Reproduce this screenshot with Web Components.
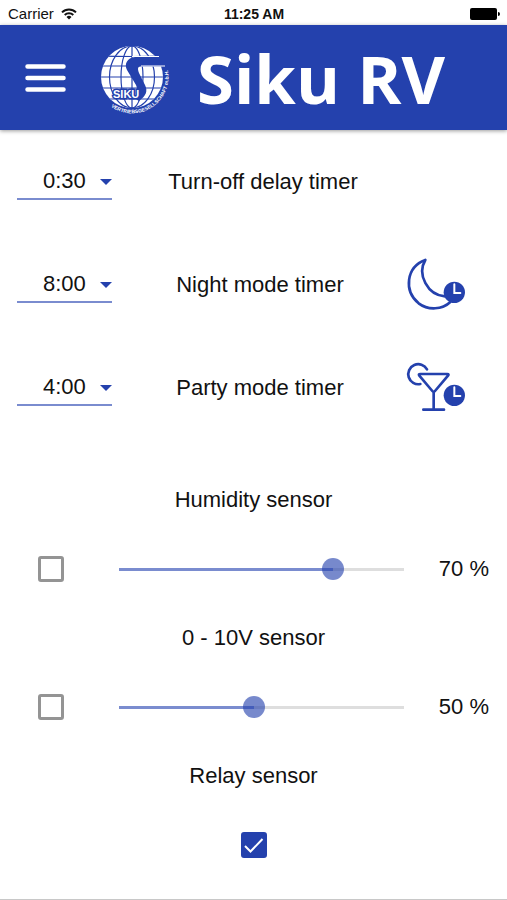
<!DOCTYPE html>
<html lang="en">
<head>
<meta charset="utf-8">
<meta name="viewport" content="width=device-width, initial-scale=1">
<title>Siku RV</title>
<style>
    :root {
        --primary: #2441ad;
        --primary-soft: #7a8ccf;
    }
    body {
        margin: 0;
        background: #fff;
        color: #111;
        font: 22px/28px "Liberation Sans", Arial, sans-serif;
    }
</style>
</head>
<body>
<siku-app>
    <status-bar slot="status" carrier="Carrier" time="11:25 AM"></status-bar>
    <app-header slot="header">Siku RV</app-header>
    <timer-row slot="timers" value="0:30">Turn-off delay timer</timer-row>
    <timer-row slot="timers" value="8:00" icon="moon">Night mode timer</timer-row>
    <timer-row slot="timers" value="4:00" icon="party">Party mode timer</timer-row>
    <sensor-section slot="sensors" min="40" max="80" value="70">Humidity sensor</sensor-section>
    <sensor-section slot="sensors" min="5" max="100" value="50">0 - 10V sensor</sensor-section>
    <sensor-section slot="sensors" checked>Relay sensor</sensor-section>
</siku-app>

<script>
class SikuApp extends HTMLElement {
    constructor() {
        super();
        this.attachShadow({ mode: 'open' });
        this.shadowRoot.innerHTML = `
        <style>
            :host {
                display: flex;
                flex-direction: column;
                box-sizing: border-box;
                min-height: 100vh;
                border-bottom: 1px solid #c8c8c8;
            }
            .sensors {
                padding-top: 27px;
            }
        </style>
        <slot name="status"></slot>
        <slot name="header"></slot>
        <main>
            <div class="timers"><slot name="timers"></slot></div>
            <div class="sensors"><slot name="sensors"></slot></div>
        </main>
        `;
    }
}

class StatusBar extends HTMLElement {
    constructor() {
        super();
        this.attachShadow({ mode: 'open' });
        this.shadowRoot.innerHTML = `
        <style>
            :host {
                display: grid;
                grid-template-columns: 1fr auto 1fr;
                align-items: center;
                height: 25px;
                padding: 2px 7px 0 8px;
                box-sizing: border-box;
                font-size: 14px;
                line-height: 20px;
            }
            .network {
                display: flex;
                align-items: center;
                gap: 7px;
                font-size: 15px;
            }
            .time {
                font-weight: bold;
            }
            .battery {
                justify-self: end;
            }
            svg {
                display: block;
            }
        </style>
        <div class="network">
            <span class="carrier"></span>
            <svg width="16" height="12" viewBox="0 0 16 12" fill="none" stroke="#111" stroke-width="2" aria-hidden="true">
                <path d="M1 4.4a10 10 0 0 1 14 0M3.7 7a6.2 6.2 0 0 1 8.6 0"/>
                <path d="M8 11.5L5.5 9a3.6 3.6 0 0 1 5 0z" fill="#111" stroke="none"/>
            </svg>
        </div>
        <span class="time"></span>
        <svg class="battery" width="30" height="12" viewBox="0 0 30 12" aria-hidden="true">
            <rect width="27" height="12" rx="2"/>
            <path d="M28 4q2 0 2 2t-2 2z"/>
        </svg>
        `;
    }

    connectedCallback() {
        this.shadowRoot.querySelector('.carrier').textContent = this.getAttribute('carrier');
        this.shadowRoot.querySelector('.time').textContent = this.getAttribute('time');
    }
}

class SikuLogo extends HTMLElement {
    constructor() {
        super();
        this.attachShadow({ mode: 'open' });
        this.shadowRoot.innerHTML = `
        <style>
            :host {
                display: block;
            }
            svg {
                display: block;
                overflow: visible;
            }
            text {
                fill: #fff;
                font-family: "Liberation Sans", Arial, sans-serif;
                font-size: 5px;
                font-weight: bold;
            }
            .name {
                font-size: 11px;
                stroke: var(--primary);
                stroke-width: 3px;
                paint-order: stroke;
            }
        </style>
        <svg width="68" height="70" viewBox="0 -3 68 70" role="img" aria-label="Siku">
            <defs>
                <clipPath id="globe"><circle cx="32" cy="31" r="31"/></clipPath>
                <path id="rim" d="M11 60.7A36.5 36.5 0 0 0 66.500 19"/>
            </defs>
            <circle cx="32" cy="31" r="31" fill="#fff"/>
            <g clip-path="url(#globe)" fill="none" stroke="var(--primary)" stroke-width="1.2">
                <path d="M0 20H64M0 31H64M0 42H64M0 53H64M0 10Q32 11 64 10M32 0V62"/>
                <ellipse cx="32" cy="31" rx="11" ry="31"/>
                <ellipse cx="32" cy="31" rx="22.5" ry="31"/>
            </g>
            <path d="M66 11H35C27 12 24 18 27 24L36 39C38 44 37 48 34 52L39 55C46 50 48 45 45 39L39 27C37 22 38 20 42 20H66z" fill="var(--primary)"/>
            <path d="M32 10.5H59M41 20H65" stroke="#fff" stroke-width="1"/>
            <text class="name" x="13" y="52">SIKU</text>
            <text><textPath href="#rim">VERTRIEBSGESELL</textPath></text>
            <text><textPath href="#rim" startOffset="49">SCHAFT m.b.H.</textPath></text>
        </svg>
        `;
    }
}

class AppHeader extends HTMLElement {
    constructor() {
        super();
        this.attachShadow({ mode: 'open' });
        this.shadowRoot.innerHTML = `
        <style>
            :host {
                display: block;
            }
            header {
                display: flex;
                align-items: center;
                height: 105px;
                padding: 0 25px;
                background: var(--primary);
                color: #fff;
                box-shadow: 0 1px 4px rgba(0, 0, 0, .4);
            }
            button {
                flex: none;
                padding: 0;
                border: 0;
                background: none;
                color: inherit;
                cursor: pointer;
            }
            svg {
                display: block;
            }
            siku-logo {
                flex: none;
                margin: 0 29px 0 34px;
            }
            h1 {
                margin: 0;
                font: bold 67px/96px "Open Sans", "Noto Sans", sans-serif;
                white-space: nowrap;
            }
        </style>
        <header>
            <button type="button" aria-label="Menu">
                <svg width="41" height="28" viewBox="0 0 41 28" stroke="currentColor" stroke-width="4.5" stroke-linecap="round" aria-hidden="true">
                    <path d="M2.5 2.5H38.5M2.5 14H38.5M2.5 25.5H38.5"/>
                </svg>
            </button>
            <siku-logo></siku-logo>
            <h1><slot></slot></h1>
        </header>
        `;
    }
}

const CLOCK = '<circle cx="178" cy="128" r="32" fill="currentColor" stroke="none"/><path d="M178 104V130H196" stroke="#fff" stroke-width="6"/>';

const MODE_ICONS = {
    moon: `<path d="M91 31C33 52 26 124 71 161C100 183 142 180 166 157M91 31C65 74 98 137 150 140"/>${CLOCK}`,
    party: `<path d="M76 64H157Q163 64 159 69L120 115Q116 120 112 115L73 69Q69 64 76 64zM116 118V170M85 171H147M96 50A30 30 0 1 0 76 94"/>${CLOCK}`,
};

class TimerRow extends HTMLElement {
    constructor() {
        super();
        this.attachShadow({ mode: 'open' });
        this.shadowRoot.innerHTML = `
        <style>
            :host {
                display: flex;
                align-items: center;
                height: 103px;
                padding: 0 42px 0 17px;
            }
            .field {
                display: grid;
                flex: none;
                width: 95px;
                align-items: center;
            }
            .field > * {
                grid-area: 1 / 1;
            }
            select {
                appearance: none;
                height: 36px;
                padding: 0 0 0 26px;
                border: 0;
                border-bottom: 2px solid var(--primary-soft);
                border-radius: 0;
                background: none;
                color: inherit;
                font: inherit;
                outline: none;
            }
            .arrow {
                justify-self: end;
                pointer-events: none;
                color: var(--primary);
            }
            label {
                flex: 1;
                text-align: center;
            }
            .icon {
                flex: none;
                min-width: 51px;
                color: var(--primary);
            }
            svg {
                display: block;
                overflow: visible;
            }
        </style>
        <div class="field">
            <select id="time"></select>
            <svg class="arrow" width="12" height="6" viewBox="0 0 12 6" fill="currentColor" aria-hidden="true"><path d="M0 0H12L6 6z"/></svg>
        </div>
        <label for="time"><slot></slot></label>
        <div class="icon"></div>
        `;
    }

    connectedCallback() {
        this.shadowRoot.querySelector('select').add(new Option(this.getAttribute('value')));

        const icon = MODE_ICONS[this.getAttribute('icon')];
        if (icon) {
            this.shadowRoot.querySelector('.icon').innerHTML = `
            <svg width="57" height="54" viewBox="39 25 171 162" fill="none" stroke="currentColor" stroke-width="8" stroke-linecap="round" aria-hidden="true">${icon}</svg>`;
        }
    }
}

class TickBox extends HTMLElement {
    constructor() {
        super();
        this.attachShadow({ mode: 'open', delegatesFocus: true });
        this.shadowRoot.innerHTML = `
        <style>
            :host {
                display: inline-grid;
            }
            input, svg {
                grid-area: 1 / 1;
            }
            input {
                appearance: none;
                box-sizing: border-box;
                width: 26px;
                height: 26px;
                margin: 0;
                border: 3px solid #949494;
                border-radius: 3px;
                cursor: pointer;
            }
            input:checked {
                border-color: var(--primary);
                background: var(--primary);
            }
            svg {
                visibility: hidden;
                pointer-events: none;
            }
            input:checked + svg {
                visibility: visible;
            }
        </style>
        <input type="checkbox">
        <svg width="26" height="26" viewBox="0 0 26 26" fill="none" stroke="#fff" stroke-width="2" aria-hidden="true"><path d="M4 14L9.5 19.5L21.5 7"/></svg>
        `;
    }

    connectedCallback() {
        const input = this.shadowRoot.querySelector('input');
        input.checked = this.hasAttribute('checked');
        input.setAttribute('aria-label', this.getAttribute('label'));
    }
}

class LevelSlider extends HTMLElement {
    constructor() {
        super();
        this.attachShadow({ mode: 'open' });
        this.shadowRoot.innerHTML = `
        <style>
            :host {
                display: flex;
                align-items: center;
                gap: 24px;
            }
            input {
                appearance: none;
                flex: 1;
                min-width: 0;
                height: 22px;
                margin: 0;
                cursor: pointer;
                /* the line runs between the thumb's two end centres */
                background:
                    linear-gradient(to right, var(--primary-soft) var(--fill), #dedede var(--fill))
                    11px center / calc(100% - 22px) 3px no-repeat;
            }
            input::-webkit-slider-thumb {
                appearance: none;
                width: 22px;
                height: 22px;
                border-radius: 50%;
                background: rgba(36, 65, 173, .62);
            }
            output {
                min-width: 50px;
                text-align: right;
                white-space: nowrap;
            }
        </style>
        <input type="range">
        <output></output>
        `;
        this.input = this.shadowRoot.querySelector('input');
        this.output = this.shadowRoot.querySelector('output');
        this.input.addEventListener('input', this.update.bind(this));
    }

    connectedCallback() {
        this.input.min = this.getAttribute('min');
        this.input.max = this.getAttribute('max');
        this.input.value = this.getAttribute('value');
        this.input.setAttribute('aria-label', this.getAttribute('label'));
        this.update();
    }

    update() {
        const { min, max, value } = this.input;
        this.input.style.setProperty('--fill', `${(value - min) / (max - min) * 100}%`);
        this.output.textContent = `${value} %`;
    }
}

class SensorSection extends HTMLElement {
    constructor() {
        super();
        this.attachShadow({ mode: 'open' });
    }

    connectedCallback() {
        const label = this.textContent;
        const hasLevel = this.hasAttribute('value');

        this.shadowRoot.innerHTML = `
        <style>
            :host {
                display: block;
            }
            h2 {
                margin: 0;
                font: inherit;
                line-height: 68px;
                text-align: center;
            }
            .controls {
                display: flex;
                align-items: center;
                justify-content: center;
                gap: 44px;
                height: 70px;
                padding: 0 18px 0 38px;
            }
            .controls.single {
                padding: 0;
            }
            level-slider {
                flex: 1;
            }
        </style>
        <h2><slot></slot></h2>
        <div class="controls ${hasLevel ? '' : 'single'}">
            <tick-box label="${label}" ${this.hasAttribute('checked') ? 'checked' : ''}></tick-box>
            ${hasLevel ? `<level-slider label="${label}" min="${this.getAttribute('min')}" max="${this.getAttribute('max')}" value="${this.getAttribute('value')}"></level-slider>` : ''}
        </div>
        `;
    }
}

customElements.define('siku-app', SikuApp);
customElements.define('status-bar', StatusBar);
customElements.define('siku-logo', SikuLogo);
customElements.define('app-header', AppHeader);
customElements.define('timer-row', TimerRow);
customElements.define('tick-box', TickBox);
customElements.define('level-slider', LevelSlider);
customElements.define('sensor-section', SensorSection);
</script>
</body>
</html>
